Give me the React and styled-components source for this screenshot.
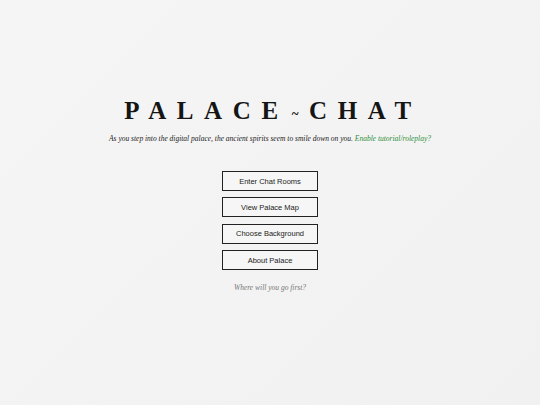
import React from "react";
import styled, { createGlobalStyle } from "styled-components";

const GlobalStyle = createGlobalStyle`
  html, body {
    margin: 0;
    padding: 0;
  }
  body {
    background: #f3f3f3;
    font-family: "Liberation Serif", serif;
  }
`;

const Page = styled.div`
  box-sizing: border-box;
  width: 100%;
  height: 405px;
  display: flex;
  flex-direction: column;
  align-items: center;
  padding-top: 96px;
  background: linear-gradient(135deg, #f5f5f5 0%, #f1f1f1 100%);
`;

const Title = styled.h1`
  margin: 0 0 0 6px;
  font-family: "Liberation Serif", serif;
  font-weight: bold;
  font-size: 25px;
  line-height: 30px;
  letter-spacing: 10.6px;
  color: #151515;
`;

const Tilde = styled.span`
  font-size: 13px;
  vertical-align: 1px;
  margin-left: 3px;
`;

const Tagline = styled.p`
  margin: 5px 0 0;
  font-family: "Liberation Serif", serif;
  font-style: italic;
  font-size: 7.5px;
  color: #222;
`;

const Link = styled.a`
  color: #2f8f3a;
  cursor: pointer;
`;

const Menu = styled.nav`
  margin-top: 28px;
  display: flex;
  flex-direction: column;
  gap: 6.4px;
`;

const MenuButton = styled.button`
  box-sizing: border-box;
  width: 96px;
  height: 20px;
  padding: 0;
  border: 1px solid #222;
  background: #f6f6f6;
  font-family: "Liberation Sans", sans-serif;
  font-size: 7.5px;
  color: #222;
  cursor: pointer;
`;

const Hint = styled.p`
  margin: 13px 0 0;
  font-family: "Liberation Serif", serif;
  font-style: italic;
  font-size: 7.5px;
  color: #777;
`;

const items = ["Enter Chat Rooms", "View Palace Map", "Choose Background", "About Palace"];

export default function App() {
  return (
    <>
      <GlobalStyle />
      <Page>
        <Title>
          PALACE<Tilde>~</Tilde>CHAT
        </Title>
        <Tagline>
          As you step into the digital palace, the ancient spirits seem to smile down on you.{" "}
          <Link>Enable tutorial/roleplay?</Link>
        </Tagline>
        <Menu>
          {items.map((label) => (
            <MenuButton key={label}>{label}</MenuButton>
          ))}
        </Menu>
        <Hint>Where will you go first?</Hint>
      </Page>
    </>
  );
}
